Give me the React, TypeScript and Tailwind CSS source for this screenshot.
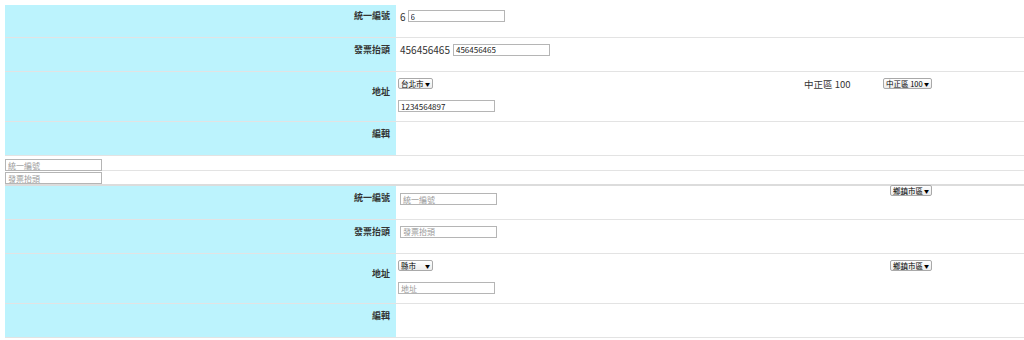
import React from 'react';

const font = { fontFamily: '"Noto Sans CJK TC", "Noto Sans", sans-serif' };

function Select({ value, width }: { value: string; width: string }) {
    return (
        <span className={`relative inline-flex ${width}`}>
            <select
                className="appearance-none w-full h-[11px] leading-[9px] text-[7.5px] text-black pl-[2px] pr-[7px] border border-[#a9a9a9] rounded-[2px] bg-gradient-to-b from-white to-[#ececec] outline-none"
                defaultValue={value}
            >
                <option>{value}</option>
            </select>
            <span className="pointer-events-none absolute right-[3px] top-[2px] text-[5px] leading-[7px] text-black">
                ▼
            </span>
        </span>
    );
}

function Input({
    value,
    placeholder,
    className = '',
}: {
    value?: string;
    placeholder?: string;
    className?: string;
}) {
    return (
        <input
            className={`block w-[97px] h-[12px] border border-[#b5b5b5] px-[2px] text-[8px] leading-[10px] text-[#222] placeholder:text-[#999] outline-none ${className}`}
            defaultValue={value}
            placeholder={placeholder}
        />
    );
}

function Row({
    label,
    height,
    children,
    contentClass = 'items-center pb-[10px] pl-[4px]',
}: {
    label: string;
    height: string;
    children?: React.ReactNode;
    contentClass?: string;
}) {
    return (
        <div className={`grid grid-cols-[391px_1fr] border-b border-[#e3e3e3] ${height}`}>
            <div className="bg-[#bcf3fd] flex items-center justify-end pb-[10px] pr-[6px] text-[9px] font-semibold text-[#333]">
                {label}
            </div>
            <div className={`flex ${contentClass}`}>{children}</div>
        </div>
    );
}

export default function App() {
    return (
        <div className="bg-white w-[1024px] h-[340px] overflow-hidden pl-[5px] pt-[5px]" style={font}>
            {/* filled form */}
            <Row label="統一編號" height="h-[33px]">
                <span className="text-[10px] text-[#333] mr-[2px]">6</span>
                <Input value="6" />
            </Row>
            <Row label="發票抬頭" height="h-[34px]">
                <span className="text-[10px] text-[#333] mr-[3px]">456456465</span>
                <Input value="456456465" className="w-[95px] text-[7px]" />
            </Row>
            <Row label="地址" height="h-[50px]" contentClass="items-start pt-[6px] pl-[2px]">
                <div className="w-[406px] flex flex-col items-start gap-[11px]">
                    <Select value="台北市" width="w-[35px]" />
                    <Input value="1234564897" />
                </div>
                <span className="w-[79px] text-[9.5px] leading-[12px] text-[#333]">中正區 100</span>
                <Select value="中正區 100" width="w-[49px]" />
            </Row>
            <Row label="編輯" height="h-[34px]" />

            {/* loose inputs */}
            <div className="h-[15px] border-b border-[#e3e3e3] flex items-start pt-[3px]">
                <Input placeholder="統一編號" className="w-[96px] h-[11px]" />
            </div>
            <div className="h-[15px] border-b-2 border-[#dcdcdc] flex items-start pt-[1px]">
                <Input placeholder="發票抬頭" className="w-[96px] h-[12px]" />
            </div>

            {/* empty form */}
            <Row label="統一編號" height="h-[34px]" contentClass="items-start pl-[4px]">
                <div className="w-[490px] flex pt-[7px]">
                    <Input placeholder="統一編號" />
                </div>
                <div className="flex -mt-[1px]">
                    <Select value="鄉鎮市區" width="w-[42px]" />
                </div>
            </Row>
            <Row label="發票抬頭" height="h-[34px]">
                <Input placeholder="發票抬頭" />
            </Row>
            <Row label="地址" height="h-[50px]" contentClass="items-start pt-[6px] pl-[2px]">
                <div className="w-[492px] flex flex-col items-start gap-[11px]">
                    <Select value="縣市" width="w-[35px]" />
                    <Input placeholder="地址" />
                </div>
                <Select value="鄉鎮市區" width="w-[42px]" />
            </Row>
            <Row label="編輯" height="h-[34px]" />
        </div>
    );
}
